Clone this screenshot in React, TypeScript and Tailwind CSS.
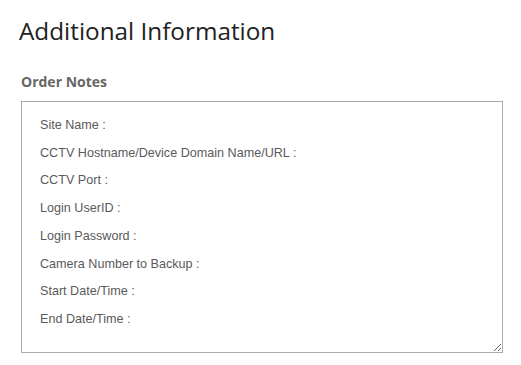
const notes = [
  'Site Name :',
  'CCTV Hostname/Device Domain Name/URL :',
  'CCTV Port :',
  'Login UserID :',
  'Login Password :',
  'Camera Number to Backup :',
  'Start Date/Time :',
  'End Date/Time :',
].join('\n');

export default function App() {
  return (
    <div className="min-h-screen bg-white pl-[19px] pr-[19px] pt-[12px] font-['Open_Sans',sans-serif]">
      <h3 className="text-[24.3px] font-normal leading-[37px] text-[#222]">Additional Information</h3>

      <div className="mt-[23px] pl-[2px]">
        <label className="mb-[9px] block text-[14px] font-bold leading-[20px] text-[#666]">Order Notes</label>
        <textarea
          defaultValue={notes}
          className="block h-[252px] w-[482px] resize-y border border-[#aaa] bg-white px-[18px] pt-[10px] font-['Liberation_Sans',Arial,sans-serif] text-[12.6px] leading-[27.7px] text-[#5a5a5a] outline-none"
        />
      </div>
    </div>
  );
}
